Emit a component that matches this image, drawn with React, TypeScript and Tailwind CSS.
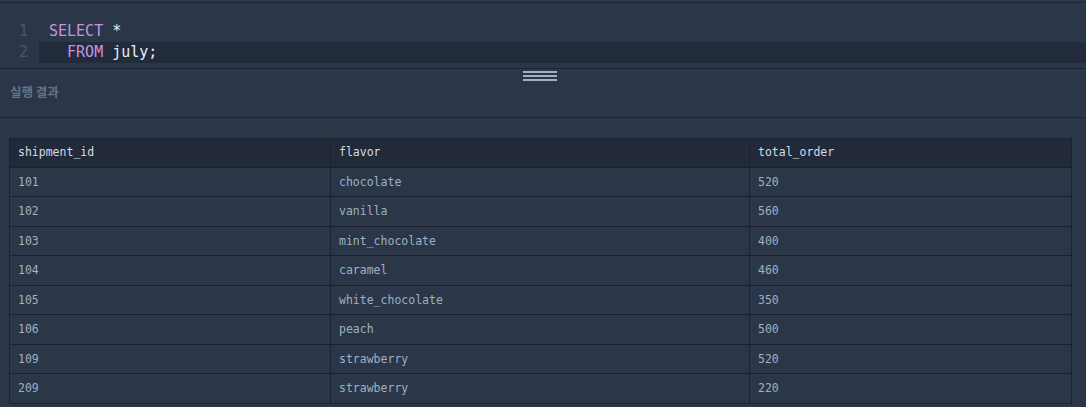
import React from "react";

const rows = [
  ["101", "chocolate", "520"],
  ["102", "vanilla", "560"],
  ["103", "mint_chocolate", "400"],
  ["104", "caramel", "460"],
  ["105", "white_chocolate", "350"],
  ["106", "peach", "500"],
  ["109", "strawberry", "520"],
  ["209", "strawberry", "220"],
];

const mono = "font-['DejaVu_Sans_Mono',monospace]";

export default function App() {
  return (
    <div className="w-[1086px] h-[407px] overflow-hidden bg-[#2b3748] pt-[2px]">
      {/* editor */}
      <div className={`border-t border-b border-[#1c2431] pt-[18px] pb-[5px] ${mono} text-[15px] leading-[21px]`}>
        <div className="flex">
          <span className="w-[39px] pr-[11px] text-right text-[#4a5769]">1</span>
          <span className="pl-[10px] text-[#e6edf3]">
            <span className="text-[#c592e0]">SELECT</span> *
          </span>
        </div>
        <div className="flex">
          <span className="w-[39px] pr-[11px] text-right text-[#4a5769]">2</span>
          <span className="flex-1 pl-[10px] bg-[#222b3b] whitespace-pre text-[#e6edf3]">
            {"  "}
            <span className="text-[#c592e0]">FROM</span> july;
          </span>
        </div>
      </div>

      {/* resize handle */}
      <div className="flex justify-center pt-[2px] pr-[6px]">
        <div className="flex flex-col gap-[2.5px] w-[34px]">
          <div className="h-[1.5px] bg-[#a3b0bd]" />
          <div className="h-[1.5px] bg-[#a3b0bd]" />
          <div className="h-[1.5px] bg-[#a3b0bd]" />
        </div>
      </div>

      {/* result header */}
      <div className="h-[37px] border-b border-[#1c2431] px-[10px] pt-[1px] font-['Noto_Sans_CJK_KR',sans-serif] font-bold text-[12.5px] leading-[20px] text-[#62758b]">
        실행 결과
      </div>

      {/* result table */}
      <div className="pt-[20px] pl-[9px] pr-[15px]">
        <table className={`w-[1062px] border-collapse table-fixed ${mono} text-[11.5px]`}>
          <colgroup>
            <col className="w-[321px]" />
            <col className="w-[419px]" />
            <col className="w-[322px]" />
          </colgroup>
          <thead>
            <tr className="bg-[#222a3a] text-[#d3dbe4]">
              {["shipment_id", "flavor", "total_order"].map((h) => (
                <th key={h} className="h-[29px] border border-[#1a2230] px-[8px] pt-[1px] text-left font-normal">
                  {h}
                </th>
              ))}
            </tr>
          </thead>
          <tbody>
            {rows.map((r) => (
              <tr key={r[0] + r[1]} className="text-[#9fb0c2]">
                {r.map((c, i) => (
                  <td key={i} className="h-[29.5px] border border-[#1a2230] px-[8px] pt-[1px]">
                    {c}
                  </td>
                ))}
              </tr>
            ))}
          </tbody>
        </table>
      </div>
    </div>
  );
}
